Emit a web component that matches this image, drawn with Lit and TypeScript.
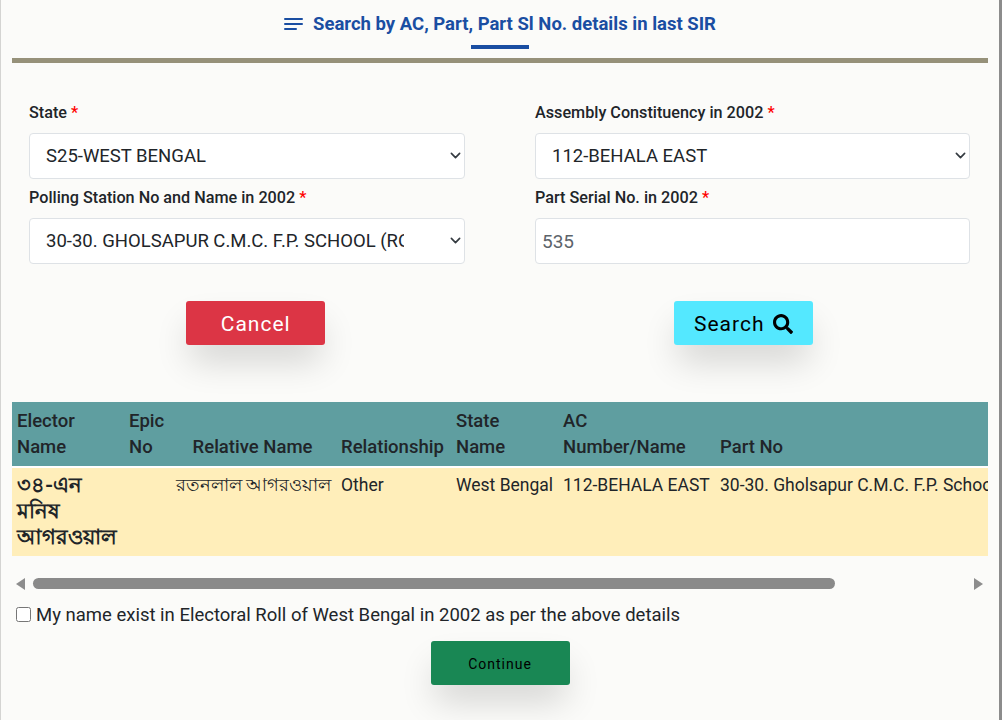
import { LitElement, html, css } from 'lit';
import { customElement } from 'lit/decorators.js';

@customElement('app-root')
export class AppRoot extends LitElement {
	static styles = css`
		:host {
			display: block;
			height: 720px;
			overflow: hidden;
			background: #fbfbf9;
			font-family: Roboto, 'Noto Sans', sans-serif;
			color: #212529;
		}

		.panel {
			position: relative;
			box-sizing: border-box;
			height: 720px;
			width: 1002px;
			padding: 0 11px;
			border-left: 1px solid #d4d4d2;
			border-right: 3px solid #8c8c8c;
			overflow: hidden;
		}

		.edge {
			position: absolute;
			right: -3px;
			top: 155px;
			width: 3px;
			height: 65px;
			background: #5d6b6d;
		}

		.title {
			display: flex;
			justify-content: center;
			align-items: center;
			gap: 10px;
			height: 45px;
			padding-top: 3px;
			box-sizing: border-box;
			font-size: 18.5px;
			font-weight: 700;
			color: #1a4ea2;
		}

		.title-bar {
			width: 58px;
			height: 4px;
			margin: 0 auto;
			background: #1a4ea2;
		}

		.rule {
			height: 5px;
			margin-top: 9px;
			background: #96917a;
		}

		.form {
			display: grid;
			grid-template-columns: 436px 435px;
			column-gap: 70px;
			padding: 39px 17px 0;
		}

		.field label {
			display: block;
			height: 31px;
			line-height: 22px;
			font-size: 16.2px;
			font-weight: 500;
		}

		.req {
			color: #f00;
		}

		.field {
			height: 85px;
		}

		.control {
			position: relative;
			height: 46px;
		}

		select,
		input {
			box-sizing: border-box;
			width: 100%;
			height: 46px;
			border: 1px solid #dee2e6;
			border-radius: 4px;
			background: #fff;
			font-family: inherit;
			outline: none;
		}

		select {
			appearance: none;
			padding: 0 60px 1px 16px;
			font-size: 18.5px;
			color: #212529;
		}

		input {
			padding: 1px 6px 0;
			font-size: 19px;
			color: #5c636a;
		}

		.chev {
			position: absolute;
			right: 4px;
			top: 17px;
			width: 11px;
			height: 11px;
			pointer-events: none;
		}

		.actions {
			display: flex;
			justify-content: center;
			padding: 29px 1px 0 0;
		}

		.actions div {
			display: flex;
			justify-content: center;
			width: 488px;
		}

		button {
			width: 139px;
			height: 44px;
			padding: 1px 0 0;
			border: none;
			border-radius: 3px;
			font-family: inherit;
			font-size: 21px;
			letter-spacing: 1px;
			box-shadow: 0 20px 35px -4px rgba(0, 0, 0, 0.16);
		}

		.cancel {
			background: #dc3545;
			color: #fff;
		}

		.search {
			display: flex;
			align-items: center;
			justify-content: center;
			gap: 8px;
			background: #54e8ff;
			color: #000;
		}

		.search svg {
			width: 20px;
			height: 20px;
		}

		.table-wrap {
			margin-top: 57px;
			overflow: hidden;
		}

		table {
			width: 1300px;
			table-layout: fixed;
			border-collapse: collapse;
		}

		th {
			height: 65px;
			padding: 5px 6px 6px;
			box-sizing: border-box;
			background: #5f9ea0;
			border-bottom: 2px solid #fff;
			text-align: left;
			vertical-align: bottom;
			line-height: 26px;
			font-size: 18.5px;
			font-weight: 500;
		}

		th:first-child,
		td:first-child {
			padding-left: 5px;
		}

		th.mid {
			text-align: center;
		}

		td {
			height: 89px;
			padding: 4px 6px 3px;
			box-sizing: border-box;
			background: #ffeeba;
			vertical-align: top;
			line-height: 26px;
			font-size: 17.5px;
			white-space: nowrap;
		}

		td.name {
			white-space: normal;
			font-weight: 700;
			font-size: 21px;
		}

		td.rel {
			text-align: right;
		}

		.scrollbar {
			display: flex;
			align-items: center;
			height: 17px;
			margin-top: 19px;
			padding: 0 5px 0 4px;
			gap: 8px;
		}

		.arrow {
			width: 0;
			height: 0;
			border-top: 6px solid transparent;
			border-bottom: 6px solid transparent;
		}

		.arrow.left {
			border-right: 9px solid #8d8d8d;
		}

		.arrow.right {
			border-left: 9px solid #8d8d8d;
		}

		.track {
			flex: 1;
			height: 11px;
		}

		.thumb {
			width: 802px;
			height: 11px;
			border-radius: 6px;
			background: #8a8a8a;
		}

		.agree {
			display: flex;
			align-items: center;
			gap: 5px;
			height: 26px;
			margin-top: 10px;
			padding-left: 4px;
			font-size: 18.5px;
		}

		.agree input {
			width: 15px;
			height: 15px;
			margin: -2px 0 0;
			padding: 0;
		}

		.footer {
			display: flex;
			justify-content: center;
			margin-top: 13px;
		}

		.continue {
			background: #198754;
			color: #000;
			font-size: 14px;
		}
	`;

	private chevron() {
		return html`<svg class="chev" viewBox="0 0 16 16" fill="none" stroke="#343a40" stroke-width="2.4" stroke-linecap="round" stroke-linejoin="round"><path d="M2 5l6 6 6-6"></path></svg>`;
	}

	render() {
		return html`
			<div class="panel">
				<div class="edge"></div>
				<div class="title">
					<svg width="19" height="12" viewBox="0 0 19 12" fill="#1a4ea2"><rect width="19" height="2" rx="1"></rect><rect y="5" width="19" height="2" rx="1"></rect><rect y="10" width="13" height="2" rx="1"></rect></svg>
					<span>Search by AC, Part, Part Sl No. details in last SIR</span>
				</div>
				<div class="title-bar"></div>
				<div class="rule"></div>

				<div class="form">
					<div class="field">
						<label>State <span class="req">*</span></label>
						<div class="control">
							<select><option>S25-WEST BENGAL</option></select>
							${this.chevron()}
						</div>
					</div>
					<div class="field">
						<label>Assembly Constituency in 2002 <span class="req">*</span></label>
						<div class="control">
							<select><option>112-BEHALA EAST</option></select>
							${this.chevron()}
						</div>
					</div>
					<div class="field">
						<label>Polling Station No and Name in 2002 <span class="req">*</span></label>
						<div class="control">
							<select><option>30-30. GHOLSAPUR C.M.C. F.P. SCHOOL (ROOM NO-1)</option></select>
							${this.chevron()}
						</div>
					</div>
					<div class="field">
						<label>Part Serial No. in 2002 <span class="req">*</span></label>
						<div class="control">
							<input type="text" value="535" />
						</div>
					</div>
				</div>

				<div class="actions">
					<div><button class="cancel">Cancel</button></div>
					<div>
						<button class="search">
							Search
							<svg viewBox="0 0 512 512" fill="#000"><path d="M505 442.7L405.3 343c-4.5-4.5-10.6-7-17-7H372c27.6-35.3 44-79.7 44-128C416 93.1 322.9 0 208 0S0 93.1 0 208s93.1 208 208 208c48.3 0 92.7-16.4 128-44v16.3c0 6.4 2.5 12.5 7 17l99.7 99.7c9.4 9.4 24.6 9.4 33.9 0l28.3-28.3c9.4-9.4 9.4-24.6.1-34zM208 336c-70.7 0-128-57.2-128-128 0-70.7 57.2-128 128-128 70.7 0 128 57.2 128 128 0 70.7-57.2 128-128 128z"></path></svg>
						</button>
					</div>
				</div>

				<div class="table-wrap">
					<table>
						<colgroup>
							<col style="width:111px" /><col style="width:47px" /><col style="width:165px" /><col style="width:115px" /><col style="width:107px" /><col style="width:157px" /><col />
						</colgroup>
						<thead>
							<tr>
								<th>Elector Name</th>
								<th>Epic No</th>
								<th class="mid">Relative Name</th>
								<th>Relationship</th>
								<th>State Name</th>
								<th>AC Number/Name</th>
								<th>Part No</th>
							</tr>
						</thead>
						<tbody>
							<tr>
								<td class="name">৩৪-এন মনিষ আগরওয়াল</td>
								<td></td>
								<td class="rel">রতনলাল আগরওয়াল</td>
								<td>Other</td>
								<td>West Bengal</td>
								<td>112-BEHALA EAST</td>
								<td>30-30. Gholsapur C.M.C. F.P. School (Room No-1)</td>
							</tr>
						</tbody>
					</table>
				</div>

				<div class="scrollbar">
					<div class="arrow left"></div>
					<div class="track"><div class="thumb"></div></div>
					<div class="arrow right"></div>
				</div>

				<label class="agree">
					<input type="checkbox" />
					<span>My name exist in Electoral Roll of West Bengal in 2002 as per the above details</span>
				</label>

				<div class="footer"><button class="continue">Continue</button></div>
			</div>
		`;
	}
}
